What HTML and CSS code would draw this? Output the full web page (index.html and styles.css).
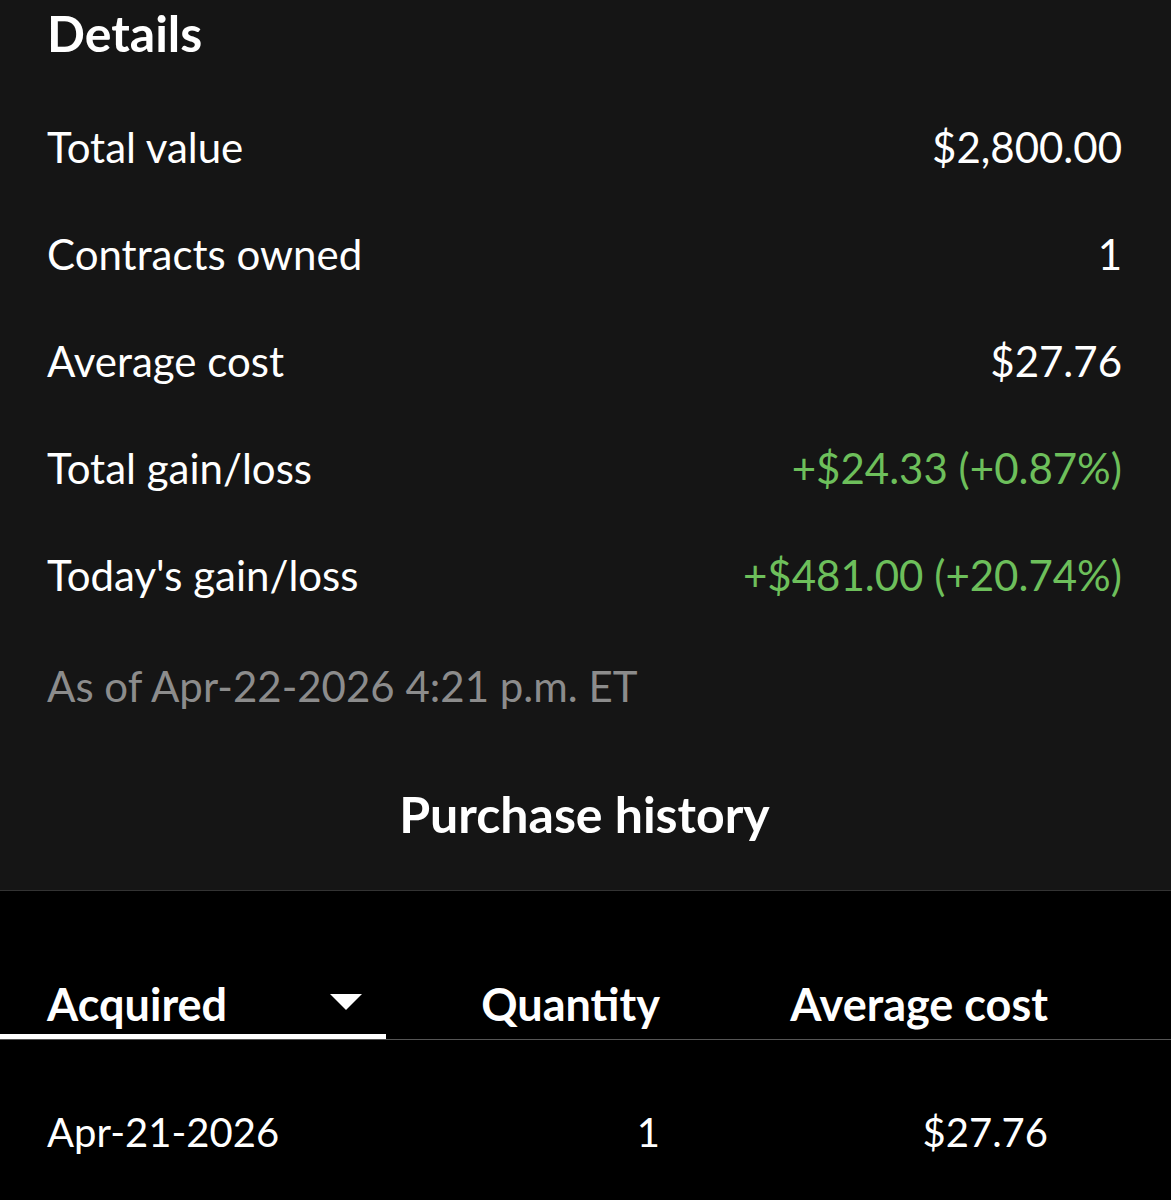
FILE: index.html
```html
<!DOCTYPE html>
<html lang="en">
<head>
  <meta charset="UTF-8" />
  <meta name="viewport" content="width=device-width, initial-scale=1.0" />
  <title>Position Details</title>
  <link rel="stylesheet" href="styles.css">
</head>
<body>
  <div class="details">
    <h1>Details</h1>
    <div class="row"><span>Total value</span><span>$2,800.00</span></div>
    <div class="row"><span>Contracts owned</span><span>1</span></div>
    <div class="row"><span>Average cost</span><span>$27.76</span></div>
    <div class="row"><span>Total gain/loss</span><span class="gain">+$24.33 (+0.87%)</span></div>
    <div class="row"><span>Today's gain/loss</span><span class="gain">+$481.00 (+20.74%)</span></div>
    <p class="as-of">As of Apr-22-2026 4:21 p.m. ET</p>
    <h2>Purchase history</h2>
  </div>

  <div class="history">
    <div class="table-head">
      <div class="col col-acquired sorted">
        <span>Acquired</span>
        <svg class="sort-icon" width="32" height="16" viewBox="0 0 32 16"><polygon points="0,0 32,0 16,16" fill="#fff"/></svg>
      </div>
      <div class="col col-qty">Quantity</div>
      <div class="col col-cost">Average cost</div>
    </div>
    <div class="table-row">
      <div class="col col-acquired">Apr-21-2026</div>
      <div class="col col-qty">1</div>
      <div class="col col-cost">$27.76</div>
    </div>
  </div>
</body>
</html>
```

FILE: styles.css
```css
body { margin: 0; background: #000; color: #fff; font-family: Lato, "Noto Sans", sans-serif; }
.details { background: #151515; padding: 0 49px 0 47px; border-bottom: 1px solid #333; }
.details h1 { margin: 0; padding-top: 6px; font-size: 50px; font-weight: 700; line-height: 54px; }
.row { display: flex; justify-content: space-between; align-items: center; height: 107px; font-size: 42px; }
.row:first-of-type { margin-top: 33px; }
.gain { color: #6dbf5b; }
.as-of { margin: 0; height: 116px; line-height: 116px; font-size: 42px; color: #8c8c8c; }
.details h2 { margin: 0; text-align: center; font-size: 50px; font-weight: 700; line-height: 54px; padding: 43px 0 49px; }
.table-head { display: flex; margin-top: 78px; border-bottom: 1px solid #555; font-weight: 700; font-size: 45px; }
.table-head .col { height: 70px; line-height: 70px; }
.col { box-sizing: border-box; }
.col-acquired { width: 386px; padding-left: 47px; }
.col-qty { width: 294px; padding-right: 20px; text-align: right; }
.col-cost { width: 388px; padding-right: 20px; text-align: right; }
.sorted { display: flex; align-items: center; justify-content: space-between; padding-right: 24px; box-shadow: inset 0 -5px 0 #fff; }
.sort-icon { margin-top: -4px; }
.table-row { display: flex; font-size: 40px; height: 184px; align-items: center; }
```
